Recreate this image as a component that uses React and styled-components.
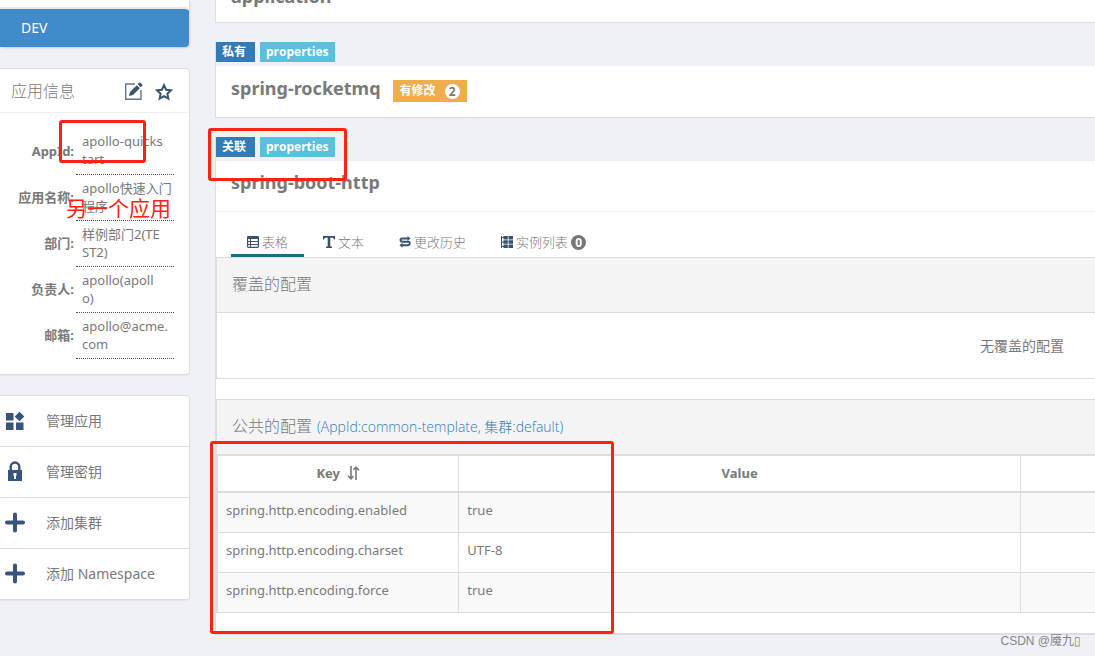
import React from 'react';
import styled, { createGlobalStyle } from 'styled-components';

const GlobalStyle = createGlobalStyle`
  * {
    box-sizing: border-box;
  }

  body {
    margin: 0;
    background: #f0f1f7;
    color: #797979;
    font-family: 'Noto Sans', 'Noto Sans CJK SC', sans-serif;
    font-size: 13px;
    line-height: 18px;
  }
`;

const Page = styled.div`
  position: relative;
  display: flex;
  gap: 25px;
  min-height: 100vh;
  overflow: hidden;
`;

const Sidebar = styled.aside`
  flex: 0 0 190px;
  display: flex;
  flex-direction: column;
  gap: 20px;
`;

const Panel = styled.section`
  background: #fff;
  border: 1px solid #dddee2;
  border-left: 0;
  border-radius: 0 4px 4px 0;
  box-shadow: 0 1px 1px rgba(0, 0, 0, 0.05);
`;

const EnvPanel = styled.section`
  padding-top: 7px;
  margin-bottom: 1px;
  background: #fff;
  border-right: 1px solid #dddee2;
  border-radius: 0 0 4px 4px;
  box-shadow: 0 1px 2px rgba(0, 0, 0, 0.15);
`;

const EnvItem = styled.a`
  display: block;
  padding: 10px 21px;
  border-top: 2px solid #e8e9ee;
  border-radius: 0 4px 4px 0;
  background: #428bca;
  background-clip: padding-box;
  color: #fff;
  font-size: 14px;
  text-decoration: none;
`;

const PanelHeader = styled.header`
  display: flex;
  align-items: center;
  gap: 12px;
  height: 44px;
  padding: 0 16px 0 11px;
  border-bottom: 1px solid #eff2f7;
`;

const PanelTitle = styled.h2`
  flex: 1;
  margin: 0;
  font-size: 16px;
  font-weight: 300;
`;

const IconButton = styled.button`
  display: flex;
  padding: 2px 0 0;
  border: 0;
  background: none;
  color: #39536f;
`;

const InfoTable = styled.table`
  width: 174px;
  margin: 15px 0;
  border-collapse: collapse;

  th {
    width: 76px;
    padding: 0 2px 0 0;
    text-align: right;
    white-space: nowrap;
  }

  td {
    height: 46px;
    padding: 4px 0 5px 6px;
    border-bottom: 1px dotted #555;
    white-space: pre-line;
  }
`;

const ManageLink = styled.a`
  display: flex;
  align-items: center;
  box-sizing: content-box;
  gap: 21px;
  height: 50px;
  padding-left: 4px;
  color: #797979;
  font-size: 14px;
  text-decoration: none;

  & + & {
    border-top: 1px solid #dddee2;
  }

  svg {
    color: #39547a;
  }
`;

const Main = styled.main`
  flex: 1;
  min-width: 0;
  margin-top: -29px;
  display: flex;
  flex-direction: column;
  gap: 19px;
`;

const Namespace = styled.section`
  border-left: 1px solid #dddee2;
  border-bottom: ${(props) => (props.$open ? 2 : 1)}px solid #dddee2;
`;

const Tags = styled.div`
  display: flex;
  gap: 5px;
  padding-bottom: 4px;
`;

const Tag = styled.span`
  min-width: 39px;
  padding: 1px 6px;
  background: ${(props) => (props.$info ? '#5bc0de' : '#337ab7')};
  color: #fff;
  font-family: 'Open Sans', 'Noto Sans CJK SC', sans-serif;
  font-size: 12px;
  font-weight: 700;
`;

const NamespaceHeader = styled.header`
  display: flex;
  align-items: center;
  gap: 12px;
  height: 51px;
  padding: 0 15px ${(props) => (props.$plain ? 2 : 8)}px;
  background: #fff;
  border-bottom: ${(props) => (props.$open ? '1px solid #eff2f7' : '0')};
`;

const NamespaceTitle = styled.h3`
  margin: 0;
  font-size: 18px;
  line-height: 24px;
`;

const Modified = styled.span`
  display: flex;
  align-items: center;
  gap: 9px;
  height: 22px;
  margin-top: 7px;
  padding: 0 7px;
  background: #f0ad4e;
  color: #fff;
  font-size: 12px;
  font-weight: 700;
`;

const Count = styled.span`
  min-width: 15px;
  height: 15px;
  border-radius: 8px;
  background: ${(props) => (props.$dark ? '#777' : '#fff')};
  color: ${(props) => (props.$dark ? '#fff' : '#777')};
  font-size: 12px;
  font-weight: 700;
  line-height: 15px;
  text-align: center;
`;

const Body = styled.div`
  background: #fff;
  padding-bottom: 20px;
`;

const Tabs = styled.nav`
  display: flex;
  height: 45px;
  padding: 18px 15px 0;
  gap: 3px;
`;

const Tab = styled.button`
  display: flex;
  align-items: center;
  gap: 3px;
  padding: 0 16px;
  border: 0;
  border-bottom: 3px solid ${(props) => (props.$active ? '#1c6d88' : 'transparent')};
  background: none;
  color: #797979;
  font: inherit;
  font-weight: 300;

  svg {
    color: #39536f;
  }
`;

const ConfigPanel = styled.section`
  border: 1px solid #ddd;
  border-right: 0;

  & + & {
    margin-top: 20px;
    border-bottom: 0;
  }
`;

const ConfigTitle = styled.h4`
  display: flex;
  align-items: center;
  gap: 5px;
  height: 54px;
  margin: 0;
  padding: 0 15px 2px;
  background: #f4f4f4;
  font-size: 16px;
  font-weight: 300;
`;

const ConfigLink = styled.a`
  padding-top: 2px;
  color: #337ab7;
  font-family: 'Open Sans', 'Noto Sans CJK SC', sans-serif;
  font-size: 14px;
  text-decoration: none;
`;

const Empty = styled.p`
  margin: 0;
  padding: 24px 31px 23px;
  border-top: 1px solid #ddd;
  font-size: 14px;
  text-align: right;
`;

const ConfigTable = styled.table`
  width: 100%;
  table-layout: fixed;
  border-collapse: collapse;

  th,
  td {
    height: 40px;
    padding: 0 8px 4px;
    border: 1px solid #ddd;
    text-align: left;
  }

  th {
    height: 37px;
    padding-bottom: 2px;
    border-top-width: 2px;
    border-bottom-width: 2px;
    text-align: center;
  }

  th:last-child,
  td:last-child {
    border-right: 0;
  }

  tbody tr:nth-child(odd) {
    background: #f9f9f9;
  }
`;

const KeyColumn = styled.col`
  width: 27.5%;
`;

const ValueColumn = styled.col`
  width: 64%;
`;

const SortButton = styled.button`
  display: inline-flex;
  align-items: center;
  gap: 7px;
  padding: 0;
  border: 0;
  background: none;
  color: inherit;
  font: inherit;
`;

// red marker frames that lie over the page
const Marker = styled.div`
  position: absolute;
  border: 3px solid #ff2213;
  border-radius: 3px;
  pointer-events: none;
`;

const AppIdMarker = styled(Marker)`
  top: 120px;
  left: 59px;
  width: 87px;
  height: 43px;
`;

const TagMarker = styled(Marker)`
  top: 128px;
  left: 208px;
  width: 139px;
  height: 53px;
`;

const TableMarker = styled(Marker)`
  top: 441px;
  left: 210px;
  width: 404px;
  height: 193px;
`;

const Note = styled.span`
  position: absolute;
  top: 195px;
  left: 66px;
  color: #ff2213;
  font-size: 21px;
  line-height: 26px;
`;

const Watermark = styled.span`
  position: absolute;
  right: 14px;
  bottom: 6px;
  color: #858589;
  font-family: 'Liberation Sans', 'Noto Sans CJK SC', sans-serif;
  font-size: 12px;
`;

const EditIcon = () => (
  <svg width="19" height="19" viewBox="0 0 19 19" fill="none" stroke="currentColor">
    <path d="M11 2H1.700v15.300H17V8" strokeWidth="1.400" opacity="0.8" />
    <path d="M5 14l1-4 6.800-6.800 3 3L9 13z" fill="currentColor" stroke="none" />
    <path d="M13.700 2.300l1.500-1.500q.6-.5 1.200 0l1.800 1.800q.5.6 0 1.200l-1.500 1.500z" fill="currentColor" stroke="none" />
  </svg>
);

const StarIcon = () => (
  <svg width="18" height="18" viewBox="0 0 18 18" fill="none" stroke="currentColor" strokeWidth="2">
    <path d="M9 2.200l2.100 4.500 4.900.6-3.600 3.400.9 4.900L9 13.200l-4.300 2.400.9-4.900L2 7.300l4.900-.6z" />
  </svg>
);

const BlocksIcon = () => (
  <svg width="21" height="21" viewBox="0 0 21 21" fill="currentColor">
    <path d="M2 3h7.500v7.500H2zM2 12.500h7.500V20H2zM12 12.500h7.500V20H12zM15.500 1.700l4.800 4.800-4.800 4.800-4.800-4.800z" />
  </svg>
);

const LockIcon = () => (
  <svg width="21" height="21" viewBox="0 0 21 21">
    <path d="M6.700 10V5.800a4.300 4.300 0 0 1 8.600 0V10" fill="none" stroke="currentColor" strokeWidth="2.400" />
    <path d="M4 9h14v11H4z" fill="currentColor" />
    <path d="M9.500 12h3v2.500l-.5.500v3H10v-3l-.5-.5z" fill="#fff" />
  </svg>
);

const PlusIcon = () => (
  <svg width="21" height="21" viewBox="0 0 21 21" stroke="currentColor" strokeWidth="4" strokeLinecap="round">
    <path d="M11 2.500v16M3 10.500h16" />
  </svg>
);

const TableIcon = () => (
  <svg width="12" height="12" viewBox="0 0 12 12" fill="none" stroke="currentColor">
    <rect x="0.600" y="0.600" width="10.800" height="10.800" rx="1" strokeWidth="1.200" />
    <path d="M0.500 1.500h11" strokeWidth="3" />
    <path d="M1 5.500h10M1 8.500h10M3.500 3v8" />
  </svg>
);

const TextIcon = () => (
  <svg width="12" height="12" viewBox="0 0 12 12" fill="currentColor">
    <path d="M0 0h12v3.500h-1L10 1.800H7.300v8.400l1.700.6V12H3v-1.200l1.700-.6V1.800H2L1 3.500H0z" />
  </svg>
);

const HistoryIcon = () => (
  <svg width="12" height="12" viewBox="0 0 12 12" fill="none" stroke="currentColor" strokeWidth="2">
    <path d="M9 2.500H3Q1.500 2.500 1.500 4t1.500 1.800h6.500Q10.800 6 10.800 7.500T9 9.300H3" />
    <path d="M8.500 0l3 2.500-3 2.500zM3.500 6.800l-3 2.500 3 2.500z" fill="currentColor" stroke="none" />
  </svg>
);

const InstanceIcon = () => (
  <svg width="12" height="12" viewBox="0 0 12 12" fill="currentColor">
    <path d="M0 0h1v12H0zM1 1h2v1H1zM1 5.500h2v1H1zM1 10h2v1H1zM2.500 0h4.300v3.500H2.500zM2.500 4.200h4.300v3.500H2.500zM2.500 8.400h4.300V12H2.500zM7.500 0H12v3.500H7.500zM7.500 4.200H12v3.500H7.500zM7.500 8.400H12V12H7.500z" />
  </svg>
);

const SortIcon = () => (
  <svg width="13" height="14" viewBox="0 0 13 14" fill="none" stroke="currentColor" strokeWidth="1.600">
    <path d="M4 0v12.500M1 9.800l3 3 2.500-2.500M9 14V1.500M6.500 3.800L9 1.200l3 3" />
  </svg>
);

const appInfo = [
  ['AppId:', 'apollo-quicks\ntart'],
  ['应用名称:', 'apollo快速入门\n程序'],
  ['部门:', '样例部门2(TE\nST2)'],
  ['负责人:', 'apollo(apoll\no)'],
  ['邮箱:', 'apollo@acme.\ncom'],
];

const configs = [
  ['spring.http.encoding.enabled', 'true'],
  ['spring.http.encoding.charset', 'UTF-8'],
  ['spring.http.encoding.force', 'true'],
];

const App = () => {
  return (
    <>
      <GlobalStyle />
      <Page>
        <Sidebar>
          <EnvPanel>
            <EnvItem href="#">DEV</EnvItem>
          </EnvPanel>

          <Panel>
            <PanelHeader>
              <PanelTitle>应用信息</PanelTitle>
              <IconButton aria-label="edit"><EditIcon /></IconButton>
              <IconButton aria-label="favorite"><StarIcon /></IconButton>
            </PanelHeader>
            <InfoTable>
              <tbody>
                {appInfo.map(([label, value]) => (
                  <tr key={label}>
                    <th scope="row">{label}</th>
                    <td>{value}</td>
                  </tr>
                ))}
              </tbody>
            </InfoTable>
          </Panel>

          <Panel as="nav">
            <ManageLink href="#"><BlocksIcon />管理应用</ManageLink>
            <ManageLink href="#"><LockIcon />管理密钥</ManageLink>
            <ManageLink href="#"><PlusIcon />添加集群</ManageLink>
            <ManageLink href="#"><PlusIcon />添加 Namespace</ManageLink>
          </Panel>
        </Sidebar>

        <Main>
          <Namespace>
            <NamespaceHeader $plain>
              <NamespaceTitle>application</NamespaceTitle>
            </NamespaceHeader>
          </Namespace>

          <Namespace>
            <Tags>
              <Tag>私有</Tag>
              <Tag $info>properties</Tag>
            </Tags>
            <NamespaceHeader>
              <NamespaceTitle>spring-rocketmq</NamespaceTitle>
              <Modified>有修改 <Count>2</Count></Modified>
            </NamespaceHeader>
          </Namespace>

          <Namespace $open>
            <Tags>
              <Tag>关联</Tag>
              <Tag $info>properties</Tag>
            </Tags>
            <NamespaceHeader $open>
              <NamespaceTitle>spring-boot-http</NamespaceTitle>
            </NamespaceHeader>
            <Body>
              <Tabs>
                <Tab $active><TableIcon />表格</Tab>
                <Tab><TextIcon />文本</Tab>
                <Tab><HistoryIcon />更改历史</Tab>
                <Tab><InstanceIcon />实例列表<Count $dark>0</Count></Tab>
              </Tabs>
              <ConfigPanel>
                <ConfigTitle>覆盖的配置</ConfigTitle>
                <Empty>无覆盖的配置</Empty>
              </ConfigPanel>
              <ConfigPanel>
                <ConfigTitle>
                  公共的配置
                  <ConfigLink href="#">(AppId:common-template, 集群:default)</ConfigLink>
                </ConfigTitle>
                <ConfigTable>
                  <colgroup>
                    <KeyColumn />
                    <ValueColumn />
                    <col />
                  </colgroup>
                  <thead>
                    <tr>
                      <th><SortButton>Key <SortIcon /></SortButton></th>
                      <th>Value</th>
                      <th />
                    </tr>
                  </thead>
                  <tbody>
                    {configs.map(([key, value]) => (
                      <tr key={key}>
                        <td>{key}</td>
                        <td>{value}</td>
                        <td />
                      </tr>
                    ))}
                  </tbody>
                </ConfigTable>
              </ConfigPanel>
            </Body>
          </Namespace>
        </Main>

        <AppIdMarker />
        <TagMarker />
        <TableMarker />
        <Note>另一个应用</Note>
        <Watermark>CSDN @魇九▯</Watermark>
      </Page>
    </>
  );
};

export default App;
